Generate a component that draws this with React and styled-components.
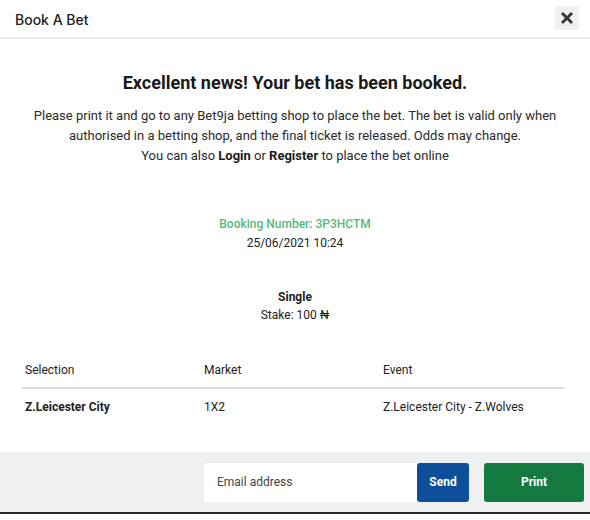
import React from 'react';
import styled, { createGlobalStyle } from 'styled-components';

const GlobalStyle = createGlobalStyle`
	body {
		margin: 0;
		background: #fff;
		font-family: Roboto, "Liberation Sans", Arial, sans-serif;
		color: #222;
	}
`;

const Modal = styled.div`
	width: 590px;
	height: 520px;
	display: flex;
	flex-direction: column;
	background: #fff;
`;

const Header = styled.header`
	height: 37px;
	display: flex;
	align-items: center;
	justify-content: space-between;
	padding: 0 11px 0 15px;
	border-bottom: 2px solid #ececee;
	box-sizing: content-box;
`;

const Title = styled.div`
	font-family: Inter, "Open Sans", sans-serif;
	font-size: 14px;
	font-weight: 500;
	color: #222;
	margin-top: 1px;
`;

const CloseButton = styled.button`
	width: 24px;
	height: 24px;
	border: none;
	border-radius: 2px;
	background: #eef0f2;
	display: flex;
	align-items: center;
	justify-content: center;
	padding: 0;
	margin-top: -1px;
`;

const Body = styled.div`
	flex: 1;
	display: flex;
	flex-direction: column;
	align-items: center;
	text-align: center;
`;

const Heading = styled.h2`
	margin: 33px 0 0;
	font-size: 18px;
	font-weight: 700;
	color: #1a1a1a;
	line-height: 22px;
`;

const Message = styled.p`
	margin: 12px 0 0;
	font-size: 13px;
	line-height: 20px;
	color: #2a2a2a;
	width: 540px;

	b {
		font-weight: 700;
		color: #1a1a1a;
	}
`;

const Booking = styled.div`
	margin-top: ${({ $first }) => ($first ? '49px' : '0')};
	font-size: 12px;
	line-height: 19px;
	color: ${({ $green }) => ($green ? '#56b97a' : '#222')};
	font-weight: ${({ $bold }) => ($bold ? 500 : 400)};
`;

const Stake = styled.div`
	margin-top: 35px;
	font-size: 12px;
	line-height: 18px;
	color: #222;

	strong {
		display: block;
		font-weight: 700;
	}
`;

const Table = styled.div`
	width: 542px;
	margin: 31px 26px 0 22px;
	text-align: left;
	font-size: 12px;
`;

const Row = styled.div`
	display: grid;
	grid-template-columns: 179px 179px 1fr;
	height: ${({ $head }) => ($head ? '34px' : '36px')};
	align-items: center;
	border-bottom: ${({ $head }) => ($head ? '2px solid #dcdcdc' : 'none')};
	box-sizing: border-box;
`;

const Cell = styled.div`
	padding-left: 3px;
	color: #222;
	font-weight: ${({ $bold }) => ($bold ? 700 : 400)};
	margin-top: ${({ $head }) => ($head ? '-2px' : '0')};
`;

const Footer = styled.footer`
	height: 60px;
	background: #eff0f2;
	border-bottom: 2px solid #2a2a2a;
	display: flex;
	justify-content: flex-end;
	align-items: center;
	padding-right: 6px;
	margin-bottom: 6px;
`;

const EmailInput = styled.input`
	width: 213px;
	height: 39px;
	box-sizing: border-box;
	border: none;
	background: #fff;
	padding: 0 13px;
	font-family: Roboto, "Liberation Sans", sans-serif;
	font-size: 12px;
	color: #333;
	outline: none;

	&::placeholder {
		color: #444;
	}
`;

const Button = styled.button`
	height: 39px;
	width: ${({ $wide }) => ($wide ? '100px' : '52px')};
	margin-left: ${({ $wide }) => ($wide ? '15px' : '0')};
	border: none;
	border-radius: 3px;
	background: ${({ $color }) => $color};
	color: #fff;
	font-family: Roboto, "Liberation Sans", sans-serif;
	font-size: 12px;
	font-weight: 700;
`;

export default function App() {
	return (
		<Modal>
			<GlobalStyle />
			<Header>
				<Title>Book A Bet</Title>
				<CloseButton aria-label="Close">
					<svg width="12" height="12" viewBox="0 0 12 12">
						<path d="M2 2 L10 10 M10 2 L2 10" stroke="#333" strokeWidth="2.8" strokeLinecap="square" />
					</svg>
				</CloseButton>
			</Header>

			<Body>
				<Heading>Excellent news! Your bet has been booked.</Heading>
				<Message>
					Please print it and go to any Bet9ja betting shop to place the bet. The bet is valid only when
					authorised in a betting shop, and the final ticket is released. Odds may change.
					<br />
					You can also <b>Login</b> or <b>Register</b> to place the bet online
				</Message>

				<Booking $first $green $bold>Booking Number: 3P3HCTM</Booking>
				<Booking>25/06/2021 10:24</Booking>

				<Stake>
					<strong>Single</strong>
					Stake: 100 ₦
				</Stake>

				<Table>
					<Row $head>
						<Cell $head>Selection</Cell>
						<Cell $head>Market</Cell>
						<Cell $head>Event</Cell>
					</Row>
					<Row>
						<Cell $bold>Z.Leicester City</Cell>
						<Cell>1X2</Cell>
						<Cell>Z.Leicester City - Z.Wolves</Cell>
					</Row>
				</Table>
			</Body>

			<Footer>
				<EmailInput placeholder="Email address" />
				<Button $color="#0e4f9b">Send</Button>
				<Button $wide $color="#147a3f">Print</Button>
			</Footer>
		</Modal>
	);
}
